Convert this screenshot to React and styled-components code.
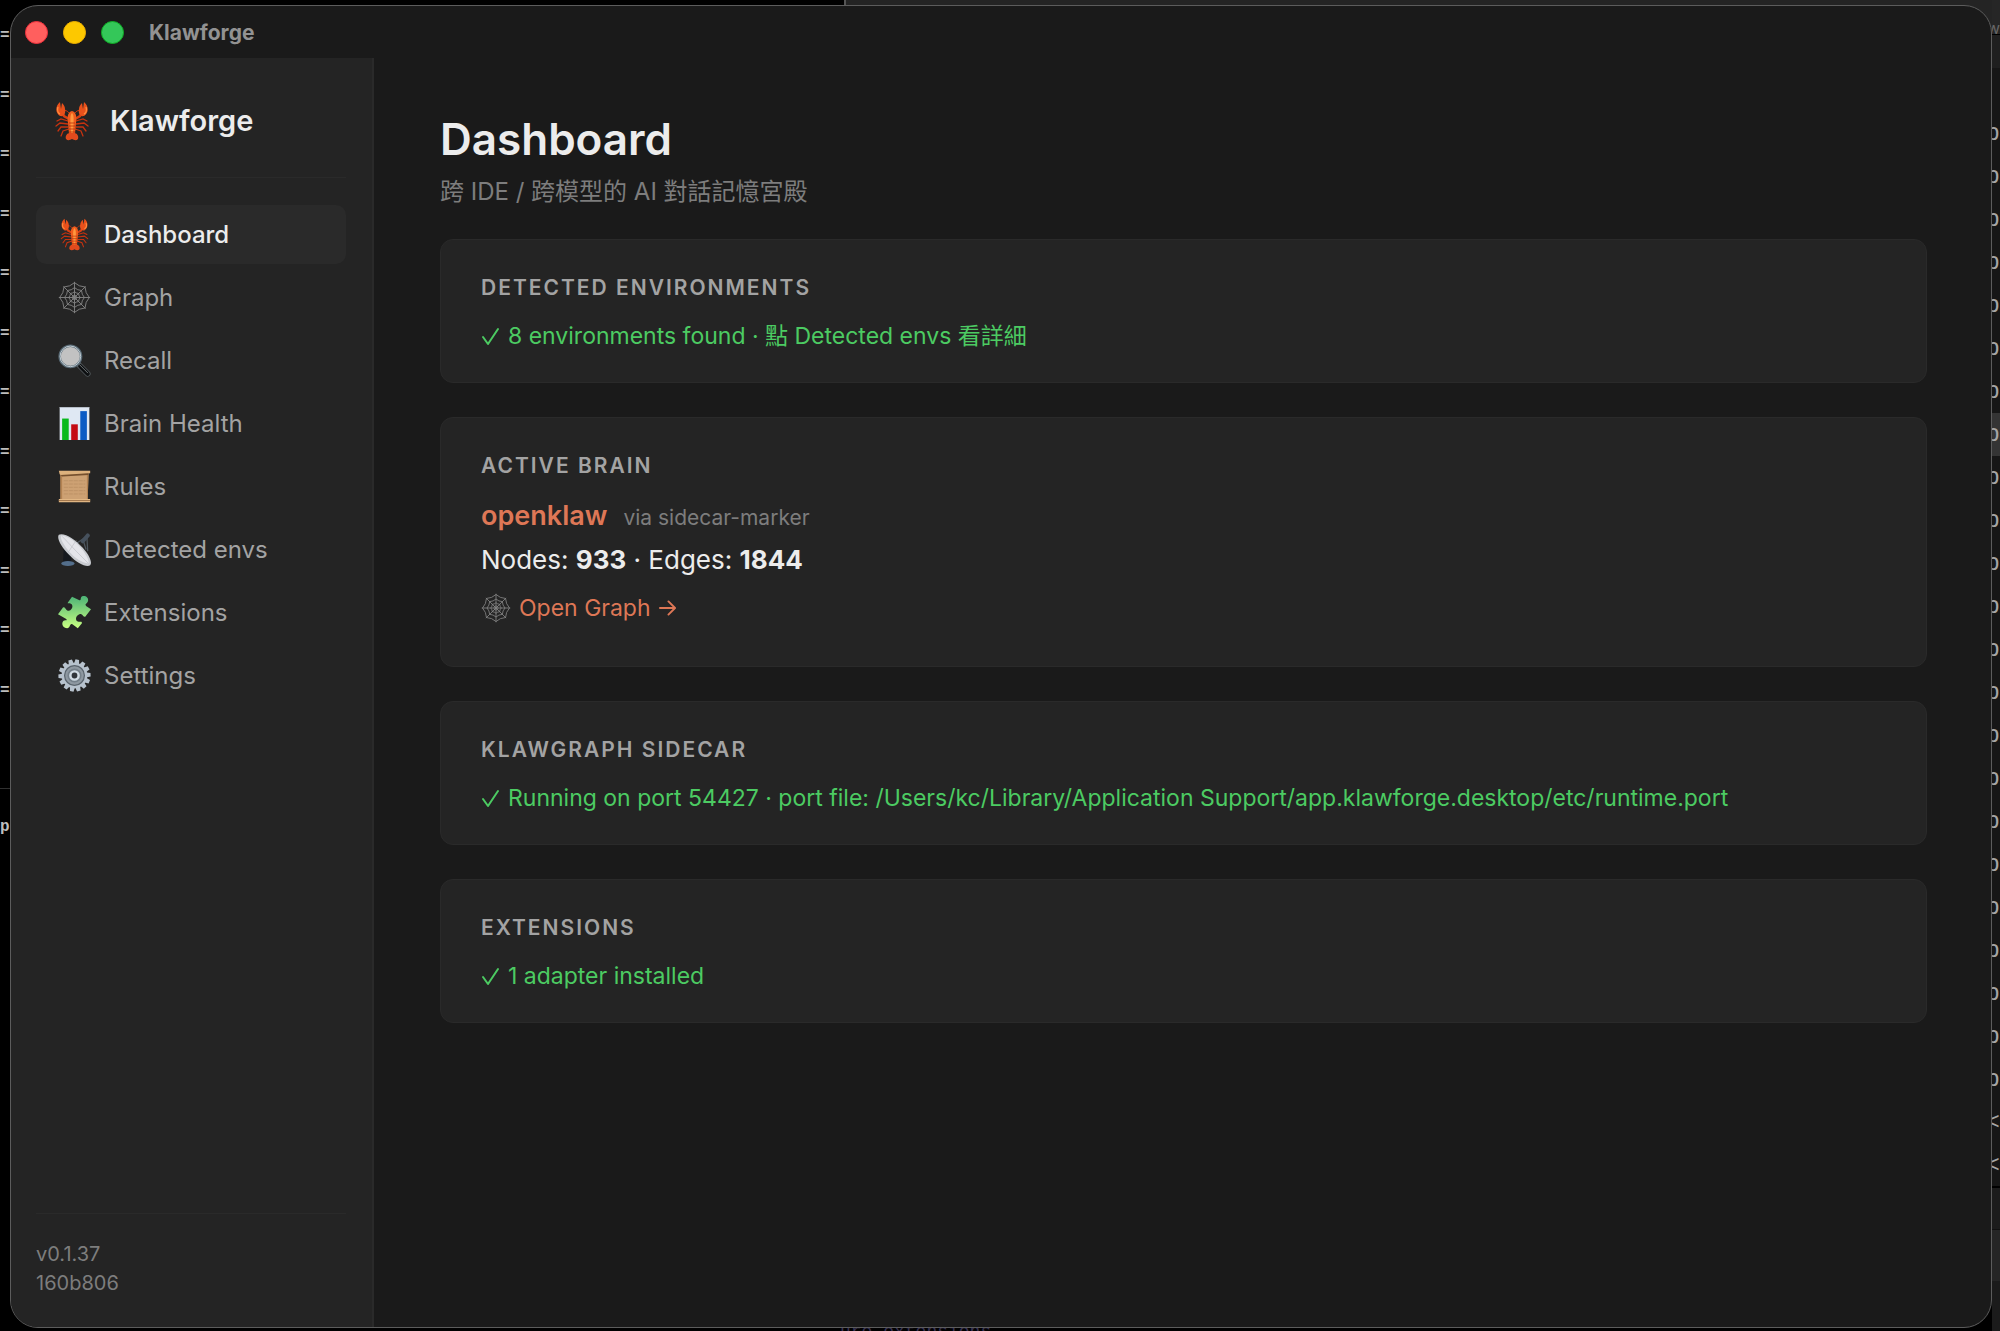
import React from 'react';
import styled, { createGlobalStyle } from 'styled-components';

const colors = {
  window: '#1a1a1a',
  panel: '#242424',
  line: '#2a2a2a',
  text: '#ececec',
  muted: '#a3a3a3',
  faint: '#7d7d7d',
  green: '#4ccb62',
  accent: '#de7756',
};

const navItems = [
  { label: 'Dashboard', icon: Lobster, active: true },
  { label: 'Graph', icon: Web },
  { label: 'Recall', icon: Magnifier },
  { label: 'Brain Health', icon: BarChart },
  { label: 'Rules', icon: Scroll },
  { label: 'Detected envs', icon: Dish },
  { label: 'Extensions', icon: Puzzle },
  { label: 'Settings', icon: Gear },
];

const GlobalStyle = createGlobalStyle`
  * {
    box-sizing: border-box;
  }

  body {
    margin: 0;
    background: #000;
    font-family: Inter, 'Noto Sans CJK TC', sans-serif;
    color: ${colors.text};
  }
`;

const Desktop = styled.div`
  display: grid;
  grid-template-columns: 10px minmax(0, 1fr) 8px;
  min-height: 100vh;
`;

// Slivers of the terminal windows that sit behind the app
const LeftEdge = styled.div`
  overflow: hidden;
  padding-top: 26px;
  background: #000;
  color: #bdbdbd;
  font-family: 'Liberation Mono', monospace;
  font-size: 16px;
  font-weight: 700;
  line-height: 20px;
`;

const LeftMarks = styled.div`
  display: flex;
  flex-direction: column;
  justify-content: space-between;
  height: 675px;
`;

const LeftPrompt = styled.div`
  margin-top: 87px;
  padding-top: 28px;
  border-top: 1px solid #303030;
`;

const RightEdge = styled.div`
  display: flex;
  flex-direction: column;
  align-items: flex-end;
  overflow: hidden;
  background: linear-gradient(
    #262626 0 34px,
    #000 34px 35px,
    #1f1f1f 35px 68px,
    #161616 68px 1186px,
    #000 1186px 1188px,
    #1c1c1c 1188px 1229px,
    #111 1229px 1230px,
    #252525 1230px 1281px,
    #1b1b1b 1281px
  );
  color: #a6a6a6;
  font-family: 'Liberation Mono', monospace;
  font-size: 24px;
`;

const RightTab = styled.div`
  height: 112px;
  padding-top: 14px;
  color: #666;
  font-family: Inter, sans-serif;
  font-size: 16px;
  line-height: 28px;
`;

const RightLine = styled.div`
  display: flex;
  flex: none;
  justify-content: flex-end;
  width: 100%;
  height: 43px;
  line-height: 43px;
  background: ${(props) => (props.$selected ? '#343434' : 'transparent')};
`;

const Middle = styled.div`
  display: flex;
  flex-direction: column;
  padding-top: 5px;
  background: linear-gradient(90deg, #000 0 834px, #555 834px 836px, #242424 836px) top / 100% 40px no-repeat;
`;

const BottomEdge = styled.div`
  height: 3px;
  padding-left: 830px;
  overflow: hidden;
  color: #373152;
  font-family: 'Liberation Mono', monospace;
  font-size: 18px;
  line-height: 8px;
`;

const Window = styled.div`
  flex: 1;
  display: flex;
  flex-direction: column;
  overflow: hidden;
  background: ${colors.window};
  border: 1px solid #5c5c5c;
  border-radius: 28px;
`;

const TitleBar = styled.header`
  display: flex;
  align-items: center;
  height: 52px;
  padding-left: 14px;
  gap: 15px;
`;

const Light = styled.button`
  width: 23px;
  height: 23px;
  padding: 0;
  border: 1px solid ${(props) => props.$edge};
  border-radius: 50%;
  background: ${(props) => props.$color};
`;

const WindowTitle = styled.span`
  margin-left: 10px;
  font-size: 21px;
  font-weight: 700;
  color: #929292;
`;

const Body = styled.div`
  flex: 1;
  display: flex;
`;

const Sidebar = styled.aside`
  display: flex;
  flex-direction: column;
  flex: none;
  width: 363px;
  padding: 26px 26px 29px 25px;
  background: ${colors.panel};
  border-right: 2px solid ${colors.line};
`;

const Brand = styled.div`
  display: flex;
  align-items: center;
  gap: 18px;
  height: 94px;
  padding: 0 0 20px 16px;
  border-bottom: 1px solid ${colors.line};
  font-size: 29px;
  font-weight: 600;
`;

const Nav = styled.nav`
  display: flex;
  flex-direction: column;
  gap: 4px;
  margin-top: 27px;
`;

const NavLink = styled.a`
  display: flex;
  align-items: center;
  gap: 13px;
  height: 59px;
  padding-left: 22px;
  border-radius: 10px;
  background: ${(props) => (props.$active ? '#2a2a2a' : 'transparent')};
  color: ${(props) => (props.$active ? colors.text : colors.muted)};
  font-size: 24px;
  font-weight: ${(props) => (props.$active ? 500 : 400)};
  text-decoration: none;
`;

const Version = styled.footer`
  margin-top: auto;
  padding-top: 26px;
  border-top: 1px solid ${colors.line};
  color: ${colors.faint};
  font-size: 20px;
  line-height: 29px;
`;

const Main = styled.main`
  flex: 1;
  min-width: 0;
  padding: 51px 64px 52px 66px;
`;

const PageTitle = styled.h1`
  margin: 0;
  font-size: 44px;
  font-weight: 600;
  line-height: 60px;
`;

const Subtitle = styled.p`
  margin: 4px 0 28px;
  color: ${colors.faint};
  font-size: 24px;
  line-height: 38px;
`;

const Cards = styled.div`
  display: flex;
  flex-direction: column;
  gap: 34px;
`;

const Card = styled.section`
  padding: 32px 40px 27px;
  background: ${colors.panel};
  border: 1px solid ${colors.line};
  border-radius: 13px;
`;

const CardTitle = styled.h2`
  margin: 0 0 13px;
  color: ${colors.muted};
  font-size: 21px;
  font-weight: 600;
  line-height: 32px;
  letter-spacing: 2px;
  text-transform: uppercase;
`;

const Status = styled.p`
  display: flex;
  align-items: center;
  gap: 7px;
  margin: 0;
  color: ${colors.green};
  font-size: 23px;
  line-height: 38px;
`;

const BrainName = styled.div`
  display: flex;
  align-items: baseline;
  gap: 16px;
  line-height: 42px;
  color: ${colors.accent};
  font-size: 27px;
  font-weight: 600;
`;

const Via = styled.span`
  color: ${colors.faint};
  font-size: 21px;
  font-weight: 400;
`;

const Counts = styled.p`
  margin: 0 0 8px;
  font-size: 26px;
  line-height: 42px;
`;

const GraphLink = styled.a`
  display: inline-flex;
  align-items: center;
  gap: 8px;
  margin-bottom: 12px;
  color: ${colors.accent};
  font-size: 23px;
  line-height: 38px;
  text-decoration: none;
`;

function Lobster({ size = 33 }) {
  return (
    <svg width={size} height={size} viewBox="0 0 40 40" aria-hidden="true">
      <g fill="none" stroke="#c8320f" strokeWidth="1.3" strokeLinecap="round">
        <path d="M16 20 9 18 5 20M16 23 8 22 4 25M16 26 9 26 6 30M17 28 11 30 9 35" />
        <path d="M24 20 31 18 35 20M24 23 32 22 36 25M24 26 31 26 34 30M23 28 29 30 31 35" />
        <path d="M18 13 15 10 12 9M22 13 25 10 28 9" strokeWidth="0.9" />
      </g>
      <g fill="none" stroke="#d83e13" strokeWidth="2.6">
        <path d="M17 18 12 15 10 11M23 18 28 15 30 11" />
      </g>
      <path d="M8 1C3 5 3 12 8 15c4 1 6-3 5-7 0-2-1-4-3-6l-1 6zM32 1c5 4 5 11 0 14-4 1-6-3-5-7 0-2 1-4 3-6l1 6z" fill="#e9501b" />
      <path d="M6 6c-1 3 0 6 2 7M34 6c1 3 0 6-2 7" stroke="#ff8d3d" strokeWidth="1.4" fill="none" />
      <path d="M20 10c4 1 5 5 4 12l-1 11h-6l-1-11c-1-7 0-11 4-12z" fill="#ef5c1d" />
      <path d="M20 12c2 2 2 6 1 20h-2c-1-14-1-18 1-20z" fill="#ff983f" />
      <path d="M17 22h6M17 25h6M17 28h6M17 31h6" stroke="#b92d0d" strokeWidth="0.8" />
      <path d="M18 32h4c3 0 5 3 4 6-2 2-4 1-6 0-2 1-4 2-6 0-1-3 1-6 4-6z" fill="#e14a1d" />
    </svg>
  );
}

function Web({ size = 33 }) {
  const ring = (r) =>
    Array.from({ length: 8 }, (_, i) => {
      const a = (i * Math.PI) / 4;
      const b = a + Math.PI / 8;
      const c = a + Math.PI / 4;
      const point = (angle, radius) =>
        `${20 + radius * Math.cos(angle)} ${20 + radius * Math.sin(angle)}`;
      return `M${point(a, r)}Q${point(b, r * 0.78)} ${point(c, r)}`;
    }).join('');

  return (
    <svg width={size} height={size} viewBox="0 0 40 40" aria-hidden="true">
      <g fill="none" stroke="#858585" strokeWidth="1.1">
        <path d="M20 1v38M1 20h38M6.500 6.500l27 27M33.500 6.500l-27 27" />
        <path d={ring(18)} />
        <path d={ring(12)} />
        <path d={ring(7)} />
        <path d={ring(3)} />
      </g>
    </svg>
  );
}

function Magnifier() {
  return (
    <svg width="33" height="33" viewBox="0 0 40 40" aria-hidden="true">
      <path d="m24 24 12 12" stroke="#50565a" strokeWidth="7" strokeLinecap="round" />
      <path d="m27 27 9 9" stroke="#0c0e10" strokeWidth="5" strokeLinecap="round" />
      <path d="m26 25 10 10" stroke="#8b9092" strokeWidth="1" strokeLinecap="round" />
      <circle cx="15" cy="15" r="13" fill="#c2c2c2" stroke="#596a75" strokeWidth="3" />
      <circle cx="15" cy="15" r="12.500" fill="none" stroke="#d5e0e5" strokeWidth="1" />
    </svg>
  );
}

function BarChart() {
  return (
    <svg width="33" height="33" viewBox="0 0 40 40" aria-hidden="true">
      <path d="M2 0h36v40H2z" fill="#dfe8f3" />
      <path d="M2 .500h36" stroke="#a9b1ba" />
      <path d="M5 14h8v26H5z" fill="#08b91b" />
      <path d="M16 21h8v19h-8z" fill="#c40a12" />
      <path d="M27 5h8v35h-8z" fill="#0b5bc4" />
    </svg>
  );
}

function Scroll() {
  return (
    <svg width="33" height="33" viewBox="0 0 40 40" aria-hidden="true">
      <path d="M3 4h34l-1 33H3z" fill="#cda173" />
      <path d="M3 4h2v33H3zM35 4h2l-1 33h-1z" fill="#b38352" />
      <path d="M7 13h26M7 17h26M7 21h26M7 25h26M7 29h26" stroke="#b58b60" strokeWidth="0.8" strokeDasharray="5 1" />
      <path d="M1 1h38v3L5 7 2 5z" fill="#ddb17d" />
      <path d="m3 6 34-2v2L5 8z" fill="#76502e" />
      <path d="M1 35h38v4H1z" fill="#e2b784" />
      <path d="M1 37h38" stroke="#946b43" />
    </svg>
  );
}

function Dish() {
  return (
    <svg width="33" height="33" viewBox="0 0 40 40" aria-hidden="true">
      <path d="m7 17 9 8v13H6z" fill="#15191e" />
      <ellipse cx="12" cy="37" rx="8" ry="3" fill="#536e8b" />
      <path d="m23 12 12-8 1 18M30 7l4 13" fill="none" stroke="#4d565e" strokeWidth="1.500" />
      <path d="m30 10 6-7" stroke="#46515d" strokeWidth="5" strokeLinecap="round" />
      <path d="M1 2C7-1 21 7 30 18c8 9 12 18 9 21-4 3-16-2-25-12C4 17-2 6 1 2z" fill="#c8cbd0" />
      <path d="M4 3c7 0 19 8 26 18 5 7 8 13 7 16-8-1-17-7-23-14C8 16 2 7 4 3z" fill="#e4e5ea" />
      <path d="m5 4 17 18 15 15M12 24l10-15" fill="none" stroke="#b7bac0" strokeWidth="0.7" />
    </svg>
  );
}

function Puzzle() {
  return (
    <svg width="33" height="33" viewBox="0 0 40 40" aria-hidden="true">
      <defs>
        <linearGradient id="puzzle" x1="0" y1="0" x2="0" y2="1">
          <stop offset="0" stopColor="#4bb276" />
          <stop offset="1" stopColor="#c8ff82" />
        </linearGradient>
      </defs>
      <path
        d="M12 8 17 1l9 4c3 1 0-4 4-5 4-1 8 3 6 7-1 3-4 2-2 5l6 4-7 9c-3 1-3-4-7-3-4 1-6 7-2 9 3 1 5-1 5 2l-5 6-7-5c-3-1-2 5-6 5-5 0-7-5-5-8 2-3 6 0 4-3L0 22l6-8c3-2 3 4 7 4 5-1 6-8 2-9-2-1-4 1-3-1z"
        fill="url(#puzzle)"
      />
    </svg>
  );
}

function Gear() {
  return (
    <svg width="33" height="33" viewBox="0 0 40 40" aria-hidden="true">
      <g fill="#b7c2cd">
        {Array.from({ length: 14 }, (_, i) => (
          <path key={i} d="m17.800.500 4.400 0 1 6h-6.400z" transform={`rotate(${(i * 360) / 14 + 10} 20 20)`} />
        ))}
      </g>
      <circle cx="20" cy="20" r="15.500" fill="#b7c2cd" />
      <circle cx="20" cy="20" r="12" fill="#8e98a1" stroke="#59636c" strokeWidth="1.500" />
      <circle cx="20" cy="20" r="8.500" fill="#75808a" />
      <circle cx="20" cy="20" r="5" fill="#30353b" stroke="#cfdae3" strokeWidth="3" />
    </svg>
  );
}

function Check() {
  return (
    <svg width="20" height="22" viewBox="0 0 20 22" aria-hidden="true">
      <path d="m2 12 5 7L17 4" fill="none" stroke="currentColor" strokeWidth="2" strokeLinecap="round" strokeLinejoin="round" />
    </svg>
  );
}

function Arrow() {
  return (
    <svg width="17" height="18" viewBox="0 0 18 18" aria-hidden="true">
      <path d="M1 9h15M10 2l7 7-7 7" fill="none" stroke="currentColor" strokeWidth="2" strokeLinecap="round" strokeLinejoin="round" />
    </svg>
  );
}

function StatusCard({ title, children }) {
  return (
    <Card>
      <CardTitle>{title}</CardTitle>
      <Status>
        <Check />
        <span>{children}</span>
      </Status>
    </Card>
  );
}

function App() {
  return (
    <Desktop>
      <GlobalStyle />
      <LeftEdge aria-hidden="true">
        <LeftMarks>
          {Array.from({ length: 12 }, (_, i) => (
            <span key={i}>=</span>
          ))}
        </LeftMarks>
        <LeftPrompt>p</LeftPrompt>
      </LeftEdge>
      <Middle>
        <Window>
          <TitleBar>
            <Light $color="#ff5f5e" $edge="#f0303c" aria-label="Close" />
            <Light $color="#fdc800" $edge="#eeb000" aria-label="Minimize" />
            <Light $color="#34c759" $edge="#0fae25" aria-label="Zoom" />
            <WindowTitle>Klawforge</WindowTitle>
          </TitleBar>
          <Body>
            <Sidebar>
              <Brand>
                <Lobster size={40} />
                Klawforge
              </Brand>
              <Nav>
                {navItems.map(({ label, icon: Icon, active }) => (
                  <NavLink key={label} href="#" $active={active}>
                    <Icon />
                    {label}
                  </NavLink>
                ))}
              </Nav>
              <Version>
                <div>v0.1.37</div>
                <div>160b806</div>
              </Version>
            </Sidebar>
            <Main>
              <PageTitle>Dashboard</PageTitle>
              <Subtitle>跨 IDE / 跨模型的 AI 對話記憶宮殿</Subtitle>
              <Cards>
                <StatusCard title="Detected environments">
                  8 environments found · 點 Detected envs 看詳細
                </StatusCard>
                <Card>
                  <CardTitle>Active brain</CardTitle>
                  <BrainName>
                    openklaw
                    <Via>via sidecar-marker</Via>
                  </BrainName>
                  <Counts>
                    Nodes: <b>933</b> · Edges: <b>1844</b>
                  </Counts>
                  <GraphLink href="#">
                    <Web size={30} />
                    Open Graph
                    <Arrow />
                  </GraphLink>
                </Card>
                <StatusCard title="Klawgraph sidecar">
                  Running on port 54427 · port file: /Users/kc/Library/Application Support/app.klawforge.desktop/etc/runtime.port
                </StatusCard>
                <StatusCard title="Extensions">1 adapter installed</StatusCard>
              </Cards>
            </Main>
          </Body>
        </Window>
        <BottomEdge aria-hidden="true">ure extensions</BottomEdge>
      </Middle>
      <RightEdge aria-hidden="true">
        <RightTab>w</RightTab>
        {Array.from({ length: 25 }, (_, i) => (
          <RightLine key={i} $selected={i === 7}>
            {i < 23 ? 'p' : '<'}
          </RightLine>
        ))}
      </RightEdge>
    </Desktop>
  );
}

export default App;
